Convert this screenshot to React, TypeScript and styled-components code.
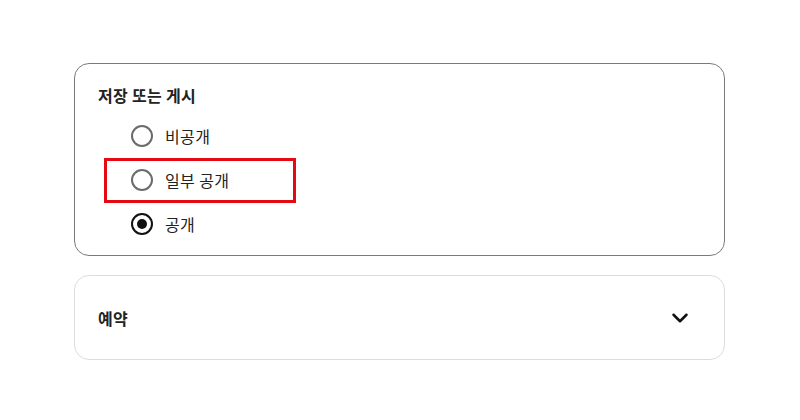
import React, { useState } from "react";
import styled, { createGlobalStyle } from "styled-components";
import { ChevronDown } from "lucide-react";

const GlobalStyle = createGlobalStyle`
    html, body {
        margin: 0;
        padding: 0;
        background: #fff;
        font-family: "Noto Sans CJK KR", "Noto Sans", sans-serif;
        color: #222;
    }
`;

const Page = styled.div`
    display: flex;
    flex-direction: column;
    gap: 19px;
    width: 651px;
    padding: 63px 0 0 74px;
`;

const Card = styled.div<{ $strong?: boolean }>`
    border: 1px solid ${p => (p.$strong ? "#7a7a7a" : "#dcdcdc")};
    border-radius: 15px;
    background: #fff;
`;

const PublishCard = styled(Card)`
    padding: 19px 23px 9px;
`;

const Title = styled.div`
    font-size: 16px;
    font-weight: 700;
    line-height: 24px;
    letter-spacing: 0.3px;
    color: #222;
`;

const OptionList = styled.div`
    display: flex;
    flex-direction: column;
    margin-top: 7px;
    padding-left: 33px;
`;

const OptionRow = styled.label`
    position: relative;
    display: flex;
    align-items: center;
    gap: 12px;
    height: 44px;
    font-size: 16px;
    letter-spacing: 0.4px;
    color: #222;
    cursor: pointer;
`;

const Radio = styled.span<{ $checked?: boolean }>`
    box-sizing: border-box;
    width: 22px;
    height: 22px;
    border-radius: 50%;
    border: 2px solid ${p => (p.$checked ? "#111" : "#6b6b6b")};
    display: flex;
    align-items: center;
    justify-content: center;
    &::after {
        content: "";
        width: 10px;
        height: 10px;
        border-radius: 50%;
        background: #111;
        display: ${p => (p.$checked ? "block" : "none")};
    }
`;

const Highlight = styled.span`
    position: absolute;
    left: -27px;
    top: 0;
    width: 192px;
    height: 45px;
    box-sizing: border-box;
    border: 3px solid #e50914;
    pointer-events: none;
`;

const ScheduleCard = styled(Card)`
    box-sizing: border-box;
    height: 85px;
    display: flex;
    align-items: center;
    justify-content: space-between;
    padding: 0 31px 0 23px;
`;

const options = [
    { id: "private", label: "비공개" },
    { id: "unlisted", label: "일부 공개" },
    { id: "public", label: "공개" },
];

export default function App() {
    const [value, setValue] = useState("public");
    return (
        <>
            <GlobalStyle />
            <Page>
                <PublishCard $strong>
                    <Title>저장 또는 게시</Title>
                    <OptionList>
                        {options.map(o => (
                            <OptionRow key={o.id} onClick={() => setValue(o.id)}>
                                <Radio $checked={value === o.id} />
                                {o.label}
                                {o.id === "unlisted" && <Highlight />}
                            </OptionRow>
                        ))}
                    </OptionList>
                </PublishCard>
                <ScheduleCard>
                    <Title>예약</Title>
                    <ChevronDown size={26} strokeWidth={2.3} color="#111" />
                </ScheduleCard>
            </Page>
        </>
    );
}
